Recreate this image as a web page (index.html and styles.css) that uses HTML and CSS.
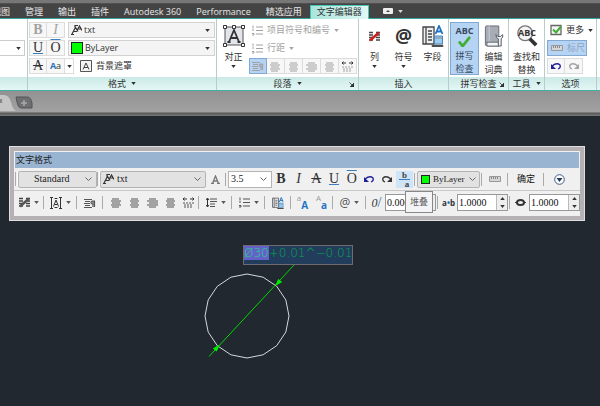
FILE: index.html
```html
<!DOCTYPE html>
<html lang="zh-CN">
<head>
<meta charset="utf-8">
<title>文字编辑器</title>
<link rel="stylesheet" href="styles.css">
</head>
<body>
<svg class="defs" aria-hidden="true">
  <symbol id="caret" viewBox="0 0 6 4"><path d="M0 0h6L3 4z" fill="currentColor"/></symbol>
  <symbol id="chev" viewBox="0 0 7 5"><path d="M.5.5l3 3 3-3" fill="none" stroke="#666"/></symbol>
  <symbol id="launch" viewBox="0 0 5 5"><path d="M.5.5L3.5 3.5M5 1v4H1z" fill="#333" stroke="#333" stroke-width=".8"/></symbol>
  <symbol id="compass" viewBox="0 0 11 10"><path d="M0 9h3M1 8.500L4.500 2 7 6M3 6h3M4 2V0h3M6 5l2.500-4.500L11 5M7 3.500h3" fill="none" stroke="#333" stroke-width="1.200"/></symbol>
  <symbol id="justify" viewBox="0 0 22 22"><path d="M2 2h18v18H2z" fill="#e2e5ea" stroke="#555"/><path d="M.5.500h3v3h-3zM18.500.5h3v3h-3zM.5 18.500h3v3h-3zM18.500 18.500h3v3h-3zM9.500.5h3v3h-3z" fill="#fff" stroke="#333"/><path d="M6 17L11 5l5 12M8 13h6M4.500 17h3M14.500 17h3" fill="none" stroke="#333" stroke-width="1.800"/></symbol>
  <symbol id="frameA" viewBox="0 0 12 12"><path d="M1.500 1v10M10.500 1v10M0 .500h3M9 .500h3M0 11.500h3M9 11.500h3M4.500 1.500h3M4.500 10.500h3" fill="none" stroke="#333"/><path d="M3.500 9.500L6 3l2.500 6.500M4.500 7.500h3" fill="none" stroke="#333"/></symbol>
  <symbol id="boxA" viewBox="0 0 12 12"><path d="M.500.500h11v11H.500z" fill="#f4f4f4" stroke="#555"/><path d="M3 9.500L6 3l3 6.500M4 7.500h4" fill="none" stroke="#444"/></symbol>
  <symbol id="list" viewBox="0 0 11 10"><path d="M4 1.500h7M4 5h7M4 8.500h7M1 0v3M0 4.500h2M0 8h2v1.500H0" fill="none" stroke="currentColor"/></symbol>
  <symbol id="spacing" viewBox="0 0 11 10"><path d="M4 1.500h7M4 4h7M4 6.500h5M4 9h5" fill="none" stroke="currentColor"/><path d="M1.500 1v8M0 2.500L1.500.500 3 2.500M0 7.500l1.500 2 1.500-2" fill="none" stroke="#333"/></symbol>
  <symbol id="para" viewBox="0 0 12 10"><path d="M0 1.500h8M1 3.500h5M0 5.500h6M1 7.500h5M0 9.500h8" fill="none" stroke="currentColor"/><path d="M11 3H8.500a1 1 0 000 3H9M9 3v6M10.500 3v6" fill="none" stroke="currentColor" stroke-width="1.200"/></symbol>
  <symbol id="al" viewBox="0 0 11 10"><path d="M1 1.500h7M0 3.500h10M1 5.500h8M0 7.500h10M1 9.500h7" fill="none" stroke="currentColor"/></symbol>
  <symbol id="ac" viewBox="0 0 11 10"><path d="M2 1.500h7M1 3.500h9M2 5.500h7M1 7.500h9M2 9.500h7" fill="none" stroke="currentColor"/></symbol>
  <symbol id="ar" viewBox="0 0 11 10"><path d="M2 1.500h7M0 3.500h11M2 5.500h9M0 7.500h11M2 9.500h7" fill="none" stroke="currentColor"/></symbol>
  <symbol id="dist" viewBox="0 0 11 10"><path d="M0 1.500h4M7 1.500h4M1.500 0L0 1.500 1.500 3M9.500 0L11 1.500 9.500 3" fill="none" stroke="#333"/><path d="M0 5.500h11M1 7.500h9M1 9.500h8" fill="none" stroke="currentColor" stroke-dasharray="2 1"/></symbol>
  <symbol id="cols" viewBox="0 0 11 11"><path d="M0 1.500h4M0 4h4M0 6.500h4M0 9h4M7 1.500h4M7 4h4M7 6.500h4M7 9h4" stroke="#444" stroke-width="1.500"/><path d="M1 9.500L10 1.500" stroke="currentColor" stroke-width="2.500"/></symbol>
  <symbol id="field" viewBox="0 0 22 22"><path d="M1 2h11v17H1z" fill="#eef0f3" stroke="#444" stroke-width="1.300"/><path d="M4 2v17M6 6h4M6 9h4M6 12h4M6 15h4" stroke="#444" stroke-width="1.300"/><path d="M12.500 11h8v8h-8z" fill="#9ecbf0" stroke="#4b87bd"/><path d="M13 13h7M10 20h11v2H10z" fill="#444" stroke="#666" stroke-width=".6"/><path d="M13.500 9L17 1l3.500 8M15 6.500h4" fill="none" stroke="#1f74c4" stroke-width="1.800"/></symbol>
  <symbol id="check" viewBox="0 0 14 12"><path d="M1 6l4 5L13 1" fill="none" stroke="#3fae32" stroke-width="3"/></symbol>
  <symbol id="dict" viewBox="0 0 20 23"><path d="M2 1h13v21H3q-2 0-2-2V3q0-2 1-2z" fill="#a8adb5" stroke="#666b73"/><path d="M2 18h13v4H3q-1-2 0-4" fill="#f5f5f5" stroke="#666b73"/><path d="M5 1v16" stroke="#ccd0d6"/><path d="M12 10q0 4 2.500 4.500V22h3v-7.500Q20 13 19 10l-2 2h-3z" fill="#eef1f5" stroke="#515861"/></symbol>
  <symbol id="find" viewBox="0 0 24 24"><circle cx="10" cy="9" r="8" fill="#f4f4f4" stroke="#777" stroke-width="1.500"/><path d="M15 15l7 7" stroke="#333" stroke-width="4"/></symbol>
  <symbol id="more" viewBox="0 0 12 11"><path d="M1 1h10v9H1z" fill="#f5f5f5" stroke="#666" stroke-width="1.300"/><path d="M3 5l3 3 5-6" fill="none" stroke="#3fae32" stroke-width="2"/></symbol>
  <symbol id="ruler" viewBox="0 0 12 6"><path d="M.500.500h11v5H.500z" fill="#d4d6d9" stroke="#999"/><path d="M2.500 1v2M4.500 1v2M6.500 1v2M8.500 1v2" stroke="#888"/></symbol>
  <symbol id="undo" viewBox="0 0 10 7"><path d="M1 3Q6-1 9 2q1 3-2 4" fill="none" stroke="currentColor" stroke-width="1.300"/><path d="M0 1v5h5z" fill="currentColor"/></symbol>
  <symbol id="redo" viewBox="0 0 10 7"><path d="M9 3Q4-1 1 2q-1 3 2 4" fill="none" stroke="currentColor" stroke-width="1.300"/><path d="M10 1v5H5z" fill="currentColor"/></symbol>
  <symbol id="annA" viewBox="0 0 9 9"><path d="M0 8.500h3M6 8.500h3M1.500 8.500L4.500 1l3 7.500M3 6h3" fill="none" stroke="#777" stroke-width="1.300"/></symbol>
  <symbol id="down" viewBox="0 0 11 11"><circle cx="5.500" cy="5.500" r="4.800" fill="#fff" stroke="#3f5c80"/><path d="M2.500 4h6l-3 4z" fill="#223a5c"/></symbol>
  <symbol id="oval" viewBox="0 0 11 8"><ellipse cx="5.500" cy="4" rx="3.500" ry="2.500" fill="none" stroke="#333" stroke-width="2"/><path d="M0 4h2M9 4h2" stroke="#333"/></symbol>
</svg>

<div class="topstrip"></div>
<nav class="menu">
  <a href="#">视图</a><a href="#">管理</a><a href="#">输出</a><a href="#">插件</a><a href="#">Autodesk 360</a><a href="#">Performance</a><a href="#">精选应用</a><a href="#" class="current">文字编辑器</a>
  <button class="minimize" aria-label="最小化"><svg width="10" height="6" viewBox="0 0 10 6"><rect width="10" height="6" rx="1" fill="#eee"/><path d="M3 4h4L5 2z" fill="#444"/></svg><svg class="caret"><use href="#caret"/></svg></button>
</nav>

<section class="ribbon">
  <div class="panel p-style">
    <div class="body"><button class="drop" aria-label="样式"><svg class="caret"><use href="#caret"/></svg></button></div>
    <h2></h2>
  </div>

  <div class="panel p-format">
    <div class="body rows">
      <div class="row">
        <button class="sq serif off"><b>B</b></button><button class="sq serif off"><i>I</i></button>
        <label class="combo"><svg class="i11"><use href="#compass"/></svg><select aria-label="字体"><option>txt</option></select><svg class="caret"><use href="#caret"/></svg></label>
      </div>
      <div class="row">
        <button class="sq serif under">U</button><button class="sq serif over">O</button>
        <label class="combo"><span class="swatch"></span><select aria-label="颜色"><option>ByLayer</option></select><svg class="caret"><use href="#caret"/></svg></label>
      </div>
      <div class="row">
        <button class="sq serif"><s>A</s></button><button class="sq case"><b>A</b>a</button><button class="mini" aria-label="大小写"><svg class="caret"><use href="#caret"/></svg></button>
        <button class="plain mask"><svg class="i12"><use href="#boxA"/></svg>背景遮罩</button>
      </div>
    </div>
    <h2>格式 <svg class="caret"><use href="#caret"/></svg></h2>
  </div>

  <div class="panel p-para">
    <div class="body">
      <button class="big"><span class="pic"><svg class="i22"><use href="#justify"/></svg></span>对正<svg class="caret"><use href="#caret"/></svg></button>
      <div class="rows">
        <button class="plain off"><svg class="i11"><use href="#list"/></svg>项目符号和编号 <svg class="caret"><use href="#caret"/></svg></button>
        <button class="plain off"><svg class="i11"><use href="#list"/></svg>行距 <svg class="caret"><use href="#caret"/></svg></button>
        <div class="row off">
          <button class="sq on" aria-label="段落"><svg class="i12"><use href="#para"/></svg></button><button class="sq" aria-label="左对齐"><svg class="i11"><use href="#al"/></svg></button><button class="sq" aria-label="居中"><svg class="i11"><use href="#ac"/></svg></button><button class="sq" aria-label="右对齐"><svg class="i11"><use href="#ar"/></svg></button><button class="sq" aria-label="两端对齐"><svg class="i11"><use href="#ac"/></svg></button><button class="sq" aria-label="分散对齐"><svg class="i11"><use href="#dist"/></svg></button>
        </div>
      </div>
    </div>
    <h2>段落 <svg class="caret"><use href="#caret"/></svg><svg class="launch"><use href="#launch"/></svg></h2>
  </div>

  <div class="panel p-insert">
    <div class="body">
      <button class="big"><span class="pic"><svg class="i11 red"><use href="#cols"/></svg></span>列<svg class="caret"><use href="#caret"/></svg></button>
      <button class="big"><span class="pic at">@</span>符号<svg class="caret"><use href="#caret"/></svg></button>
      <button class="big"><span class="pic"><svg class="i22"><use href="#field"/></svg></span>字段</button>
    </div>
    <h2>插入</h2>
  </div>

  <div class="panel p-spell">
    <div class="body">
      <button class="big on"><span class="pic abc">ABC<svg><use href="#check"/></svg></span>拼写<br>检查</button>
      <button class="big"><span class="pic"><svg class="i22"><use href="#dict"/></svg></span>编辑<br>词典</button>
    </div>
    <h2>拼写检查 <svg class="launch"><use href="#launch"/></svg></h2>
  </div>

  <div class="panel p-tools">
    <div class="body">
      <button class="big"><span class="pic find"><svg class="i22"><use href="#find"/></svg><span class="lens">ABC</span></span>查找和<br>替换</button>
    </div>
    <h2>工具 <svg class="caret"><use href="#caret"/></svg></h2>
  </div>

  <div class="panel p-options">
    <div class="body rows">
      <button class="plain"><svg class="i12"><use href="#more"/></svg>更多 <svg class="caret"><use href="#caret"/></svg></button>
      <button class="plain on ruler"><svg class="i12"><use href="#ruler"/></svg>标尺</button>
      <div class="row"><button class="sq navy" aria-label="放弃"><svg class="i10"><use href="#undo"/></svg></button><button class="sq off" aria-label="重做"><svg class="i10"><use href="#redo"/></svg></button></div>
    </div>
    <h2>选项</h2>
  </div>
  <div class="panel rest"><div class="body"></div><h2></h2></div>
</section>

<div class="tabs">
  <svg width="36" height="17" viewBox="0 0 36 17"><path d="M0 0h4q5 0 7 7 2 8 5 9H0z" fill="#c5c5c5"/><path d="M0 4l2 4M2 4l-2 4" stroke="#777"/><path d="M16 2h11q4 0 5 6v5H21q-3 0-4-6z" fill="#6d6f70" stroke="#555"/><path d="M21 8h6M24 5v6" stroke="#aaa" stroke-width="1.500"/></svg>
</div>

<main class="canvas">
  <svg class="drawing" width="100" height="100" viewBox="0 0 100 100">
    <path d="M45 9l16.100 3.200 13.600 9.100 9.100 13.600L87 51l-3.200 16.100-9.100 13.600-13.600 9.100L45 93l-16.100-3.200-13.600-9.100L6.200 67.100 3 51l3.200-16.100 9.100-13.600 13.600-9.100z" fill="none" stroke="#d5d8da"/>
    <path d="M92 0L7 91.500" stroke="#00d800"/><path d="M74 20l2.500-5.500 3 2.500zM17 80.500L14.500 86l-3-2.500z" fill="#00f000" stroke="#00f000"/>
  </svg>
  <div class="mtext"><mark>Ø30</mark>+0.01^−0.01</div>

  <section class="dialog" aria-label="文字格式">
    <h3>文字格式</h3>
    <div class="bar">
      <span class="grip"></span>
      <label class="cb c-style"><select aria-label="样式"><option>Standard</option></select><svg class="chev"><use href="#chev"/></svg></label>
      <span class="grip"></span>
      <label class="cb c-font"><svg class="i11"><use href="#compass"/></svg><select aria-label="字体"><option>txt</option></select><svg class="chev"><use href="#chev"/></svg></label>
      <button class="t w18" aria-label="注释性"><svg class="i9"><use href="#annA"/></svg></button>
      <span class="sep"></span>
      <label class="cb c-size"><select aria-label="高度"><option>3.5</option></select><svg class="chev"><use href="#chev"/></svg></label>
      <div class="marks serif">
        <button class="t"><b>B</b></button><button class="t"><i>I</i></button><button class="t"><s>A</s></button><button class="t under">U</button><button class="t over">O</button><button class="t navy" aria-label="放弃"><svg class="i10"><use href="#undo"/></svg></button><button class="t" aria-label="重做"><svg class="i10"><use href="#redo"/></svg></button>
      </div>
      <button class="t stack"><span>b</span><span>a</span></button>
      <span class="sep"></span>
      <label class="cb c-color"><span class="swatch"></span><select aria-label="颜色"><option>ByLayer</option></select><svg class="chev"><use href="#chev"/></svg></label>
      <span class="sep"></span>
      <button class="t w22" aria-label="标尺"><svg class="i12"><use href="#ruler"/></svg></button>
      <span class="sep"></span>
      <button class="t ok">确定</button>
      <span class="sep"></span>
      <button class="t w26" aria-label="选项"><svg class="i11"><use href="#down"/></svg></button>
    </div>
    <div class="bar second">
      <button class="t w26" aria-label="列"><svg class="i11"><use href="#cols"/></svg><svg class="caret"><use href="#caret"/></svg></button>
      <span class="sep"></span>
      <button class="t w30" aria-label="对正"><svg class="i12"><use href="#frameA"/></svg><svg class="caret"><use href="#caret"/></svg></button>
      <span class="sep"></span>
      <button class="t w22" aria-label="段落"><svg class="i12"><use href="#para"/></svg></button>
      <span class="sep"></span>
      <div class="aligns">
        <button class="t" aria-label="左对齐"><svg class="i11"><use href="#al"/></svg></button><button class="t" aria-label="居中"><svg class="i11"><use href="#ac"/></svg></button><button class="t" aria-label="右对齐"><svg class="i11"><use href="#ar"/></svg></button><button class="t" aria-label="两端对齐"><svg class="i11"><use href="#ac"/></svg></button><button class="t" aria-label="分散对齐"><svg class="i11"><use href="#dist"/></svg></button>
      </div>
      <span class="sep"></span>
      <button class="t w30" aria-label="行距"><svg class="i11"><use href="#spacing"/></svg><svg class="caret"><use href="#caret"/></svg></button>
      <span class="sep"></span>
      <button class="t w30" aria-label="编号"><svg class="i11"><use href="#list"/></svg><svg class="caret"><use href="#caret"/></svg></button>
      <span class="sep"></span>
      <button class="t w22" aria-label="字段"><svg class="i12"><use href="#field"/></svg></button>
      <span class="sep"></span>
      <button class="t w18 case"><sup>a</sup><b>A</b></button>
      <button class="t w18 case"><sup>A</sup><b>a</b></button>
      <span class="sep"></span>
      <button class="t w30 sym">@<svg class="caret"><use href="#caret"/></svg></button>
      <span class="sep"></span>
      <label class="lab slant" for="oblique"><i>0</i><em>/</em></label>
      <span class="spin"><input id="oblique" value="0.0000"><span class="arrows"><svg class="caret up"><use href="#caret"/></svg><svg class="caret"><use href="#caret"/></svg></span></span>
      <span class="sep"></span>
      <label class="lab" for="track">a<em>•</em>b</label>
      <span class="spin"><input id="track" value="1.0000"><span class="arrows"><svg class="caret up"><use href="#caret"/></svg><svg class="caret"><use href="#caret"/></svg></span></span>
      <span class="sep"></span>
      <label class="lab" for="width" aria-label="宽度因子"><svg class="i11"><use href="#oval"/></svg></label>
      <span class="spin"><input id="width" value="1.0000"><span class="arrows"><svg class="caret up"><use href="#caret"/></svg><svg class="caret"><use href="#caret"/></svg></span></span>
    </div>
    <div class="tip" role="tooltip">堆叠</div>
  </section>
</main>
</body>
</html>
```

FILE: styles.css
```css
* { box-sizing: border-box; }
html, body { height: 100%; margin: 0; }
body {
  display: flex; flex-direction: column; overflow: hidden;
  background: #212830; color: #333;
  font: 9px/12px "Open Sans", "Noto Sans CJK SC", sans-serif;
}
button, select, input {
  font: inherit; color: inherit; margin: 0; padding: 0;
  border: 0; background: none; appearance: none; border-radius: 0; min-width: 0;
}
button { display: flex; align-items: center; justify-content: center; white-space: nowrap; }
h2, h3 { margin: 0; font: inherit; }
.defs { display: none; }
svg { flex: none; }
.caret { width: 5px; height: 3px; }
.chev { width: 7px; height: 5px; }
.launch { width: 5px; height: 5px; }
.i9 { width: 9px; height: 9px; }
.i10 { width: 10px; height: 7px; }
.i11 { width: 11px; height: 11px; }
.i12 { width: 12px; height: 12px; }
.i22 { width: 22px; height: 22px; }
.navy { color: #20209a; }
.red { color: #cc1f1f; }
.serif { font-family: "Liberation Serif", serif; font-size: 14px; }
.under { text-decoration: underline #3a7ec0 1px; text-underline-offset: 1px; }
.over { text-decoration: overline #3a7ec0 1px; }
.swatch { flex: none; width: 12px; height: 12px; background: #0f0; border: 1px solid #222; }

.topstrip { flex: none; height: 4px; background: #777; border-bottom: 1px solid #505050; }
.menu {
  flex: none; display: flex; gap: 1px; height: 15px;
  background: #444; border-bottom: 1px solid #35a49c;
}
.menu a { padding: 0 7px; color: #e8e8e8; line-height: 16px; text-decoration: none; white-space: nowrap; }
.menu a:first-child { margin-left: -15px; }
.menu .current { height: 14px; margin-top: 1px; padding: 0 6px; line-height: 12px; color: #333; background: linear-gradient(90deg, #a9e5dc, #e0f8f4); border: 1px solid #4cc4b5; border-bottom: 0; }
.minimize { gap: 5px; margin-left: 13px; color: #ddd; }

.ribbon { flex: none; display: flex; background: #fff; border-bottom: 1px solid #43aea6; }
.panel { flex: none; display: flex; flex-direction: column; border-right: 1px solid #b9cccc; }
.panel .body { display: flex; height: 58px; padding: 3px 1px 0; }
.panel h2 {
  display: flex; align-items: center; justify-content: center; gap: 5px; position: relative;
  height: 13px; background: linear-gradient(#cbe9e6, #e4f7f5); white-space: nowrap;
}
.panel h2 .launch { position: absolute; right: 4px; top: 5px; }
.rows, .panel .body.rows { display: flex; flex-direction: column; gap: 2px; }
.row { display: flex; }
.off { color: #a2a2a2; }
.p-style { width: 28px; }
.p-format { width: 189px; }
.p-para { width: 142px; }
.p-insert { width: 90px; }
.p-spell { width: 60px; }
.p-tools { width: 36px; }
.p-options { width: 52px; }
.rest { flex: 1; border: 0; }
.p-style .body { padding: 21px 2px 0 0; }
.drop { width: 100%; height: 16px; justify-content: flex-end; padding-right: 3px; border: 1px solid #ccc; border-left: 0; }
.sq { width: 18px; height: 16px; border: 1px solid #dcdcdc; background: #f7f7f7; }
.sq + .sq { border-left: 0; }
.sq.on { background: #b5d3f3; border-color: #82a9d2; }
.combo {
  flex: 1; display: flex; align-items: center; gap: 2px; height: 16px; margin-left: 3px; padding: 0 4px 0 2px;
  background: #f4f4f4; border: 1px solid #d2d2d2;
}
.combo select { flex: 1; font-size: 9px; }
.mini { width: 9px; height: 16px; border: 1px solid #dcdcdc; border-left: 0; }
.case b { color: #1f74c4; }
.plain { height: 16px; gap: 4px; justify-content: flex-start; }
.mask { margin-left: 6px; }
.big { flex: none; width: 29px; height: 53px; flex-direction: column; justify-content: flex-start; line-height: 13px; }
.big .pic { display: flex; flex-direction: column; align-items: center; justify-content: center; width: 100%; height: 28px; flex: none; }
.p-para .big .caret, .p-insert .big .caret { margin-top: 2px; }
.p-para .big { width: 31px; }
.p-para .plain { padding-left: 3px; }
.on { background: #b5d3f3; border: 1px solid #82a9d2; }
.at { font: bold 19px/22px "Open Sans", sans-serif; }
.abc, .lens { font: bold 9px/10px "Open Sans", sans-serif; }
.abc svg { width: 13px; height: 11px; }
.big.on { color: #37485c; }
.big.on .pic { height: 26px; }
.find { position: relative; }
.lens { position: absolute; left: 8px; top: 6px; }
.p-tools .big { width: 33px; }
.p-options .body { padding-left: 2px; }
.p-options .plain { padding-left: 3px; }
.ruler { width: 40px; color: #8da3bd; }

.tabs { flex: none; height: 25px; padding-top: 4px; background: linear-gradient(#929292, #a2a2a2 85%, #555 87%, #777); }
.tabs svg { display: block; }

.canvas { flex: 1; position: relative; }
.drawing { position: absolute; left: 202px; top: 149px; }
.mtext {
  position: absolute; left: 243px; top: 129px; height: 20px;
  border: 1px solid #6e6a70; background: #223d5c; color: #0ba650;
  font: 200 12px/14px "DejaVu Sans", sans-serif; white-space: nowrap;
}
.mtext mark { display: inline-block; background: #6462c8; color: #1fd884; }

.dialog {
  position: absolute; left: 9px; top: 30px; padding-bottom: 2px;
  background: #f0f0f0; border: 5px solid #b4b0b4; outline: 1px solid #dedede; outline-offset: -1px;
}
.dialog h3 { height: 16px; margin: 1px 1px 0; padding-left: 1px; line-height: 16px; background: #99b4d1; color: #222; }
.bar { display: flex; align-items: center; height: 23px; padding-left: 1px; border-bottom: 1px solid #c8c8c8; }
.bar.second { border-bottom: 0; }
.grip { width: 3px; height: 14px; border-left: 1px solid #aaa; border-right: 1px solid #fff; }
.sep { flex: none; width: 4px; height: 13px; background: linear-gradient(90deg, transparent 1px, #aaa 1px, #aaa 2px, transparent 2px); }
.cb {
  display: flex; align-items: center; gap: 3px; height: 17px; padding: 0 4px 0 2px;
  background: #e2e2e2; border: 1px solid #b4b4b4; border-radius: 2px; color: #222;
  font: 10px/12px "Liberation Serif", serif;
}
.cb select { flex: 1; }
.c-style { width: 79px; padding-left: 15px; }
.c-font { width: 106px; }
.c-size { width: 44px; background: #fff; border-radius: 0; }
.c-color { width: 63px; padding: 0 3px; font-size: 9px; }
.c-color .swatch { width: 9px; height: 9px; }
.t { height: 17px; }
.w18 { width: 18px; }
.w22 { width: 22px; }
.w26 { width: 27px; }
.w30 { width: 29px; }
.w26, .w30 { gap: 4px; }
.marks { display: flex; width: 124px; }
.marks .t { flex: 1; }
.stack { width: 17px; flex-direction: column; background: #cfe4f7; font: bold 9px/8px "Liberation Serif", serif; color: #444; }
.stack span + span { border-top: 1px solid #3a7ec0; padding-left: 5px; width: 11px; }
.ok { width: 32px; color: #111; }
.aligns { display: flex; width: 92px; padding-left: 2px; color: #777; }
.aligns .t { flex: 1; }
.second .t { color: #555; }
.second .case sup { color: #999; font-size: 8px; line-height: 8px; align-self: flex-start; }
.second .case b { font-size: 10px; align-self: flex-end; }
.second .case.w18 { width: 19px; }
.second .sym { font-size: 12px; }
.lab { display: flex; align-items: center; justify-content: center; width: 17px; font-weight: bold; font-size: 8px; }
.lab em { font-style: normal; color: #2a6fb5; }
.slant { font: 12px/12px "Liberation Serif", serif; }
.slant em { font-size: 14px; }
.spin { display: flex; width: 51px; height: 17px; background: #fff; border: 1px solid #999; }
.spin input { flex: 1; width: 0; padding-left: 1px; font: 10px/12px "Liberation Serif", serif; color: #111; }
.arrows { display: flex; flex-direction: column; align-items: center; justify-content: space-around; width: 11px; background: #eee; border-left: 1px solid #bbb; }
.up { transform: rotate(180deg); }
.tip {
  position: absolute; left: 391px; top: 40px; width: 28px; height: 22px;
  background: #f4f4f6; border: 1px solid #888; color: #666; line-height: 20px; text-align: center;
}
```
